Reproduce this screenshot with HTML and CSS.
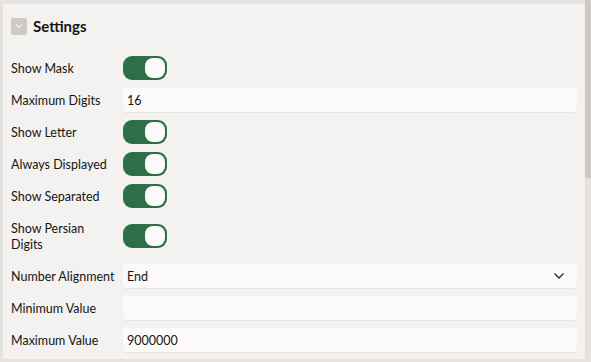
FILE: index.html
```html
<!DOCTYPE html>
<html lang="en">
<head>
    <meta charset="UTF-8">
    <meta name="viewport" content="width=device-width, initial-scale=1.0">
    <title>Settings</title>
    <link rel="stylesheet" href="styles.css">
</head>
<body>
    <div class="app">
        <div class="panel">
            <div class="panel-head">
                <span class="collapse">
                    <svg width="10" height="10" viewBox="0 0 10 10"><path d="M2 3.5 L5 6.5 L8 3.5" fill="none" stroke="#f4f3f1" stroke-width="1.2"/></svg>
                </span>
                <h3 class="title">Settings</h3>
            </div>
            <div class="form">
                <div class="row">
                    <label class="label">Show Mask</label>
                    <div class="field"><span class="switch on"></span></div>
                </div>
                <div class="row">
                    <label class="label">Maximum Digits</label>
                    <div class="field"><input class="text" type="text" value="16"></div>
                </div>
                <div class="row">
                    <label class="label">Show Letter</label>
                    <div class="field"><span class="switch on"></span></div>
                </div>
                <div class="row">
                    <label class="label">Always Displayed</label>
                    <div class="field"><span class="switch on"></span></div>
                </div>
                <div class="row">
                    <label class="label">Show Separated</label>
                    <div class="field"><span class="switch on"></span></div>
                </div>
                <div class="row">
                    <label class="label">Show Persian Digits</label>
                    <div class="field"><span class="switch on"></span></div>
                </div>
                <div class="row">
                    <label class="label">Number Alignment</label>
                    <div class="field">
                        <div class="select">
                            <span>End</span>
                            <svg width="12" height="8" viewBox="0 0 12 8"><path d="M1.5 1.5 L6 6 L10.5 1.5" fill="none" stroke="#2b2a28" stroke-width="1.3"/></svg>
                        </div>
                    </div>
                </div>
                <div class="row">
                    <label class="label">Minimum Value</label>
                    <div class="field"><input class="text" type="text" value=""></div>
                </div>
                <div class="row">
                    <label class="label">Maximum Value</label>
                    <div class="field"><input class="text" type="text" value="9000000"></div>
                </div>
            </div>
        </div>
        <div class="scrollbar"><div class="thumb"></div></div>
    </div>
</body>
</html>
```
FILE: styles.css
```css
* {
    margin: 0;
    padding: 0;
    box-sizing: border-box;
}
body {
    background-color: #e5e2df;
    font-family: 'Lato', sans-serif;
    color: #161513;
    height: 362px;
    overflow: hidden;
}
.app {
    display: flex;
    height: 359px;
}
.panel {
    flex: 1;
    margin-top: 4px;
    margin-left: 3px;
    background-color: #f3f2f0;
    padding: 0 8px 0 8px;
}
.panel-head {
    display: flex;
    align-items: center;
    gap: 6px;
    height: 43px;
    padding-top: 1px;
}
.collapse {
    width: 16px;
    height: 17px;
    border-radius: 2px;
    background-color: #cdcac6;
    display: flex;
    align-items: center;
    justify-content: center;
}
.title {
    font-size: 15px;
    font-weight: 700;
}
.form {
    padding-top: 5px;
}
.row {
    display: flex;
    align-items: center;
    padding: 4px 0;
}
.label {
    width: 112px;
    padding: 4px 6px 4px 0;
    font-size: 12.5px;
    line-height: 16px;
    position: relative;
    top: 1px;
}
.field {
    flex: 1;
}
.switch {
    display: block;
    width: 44px;
    height: 24px;
    border-radius: 9px;
    background-color: #2e6f48;
    position: relative;
}
.switch::after {
    content: '';
    position: absolute;
    top: 2px;
    right: 2px;
    width: 20px;
    height: 20px;
    border-radius: 8px;
    background-color: #fbfaf9;
}
.text, .select {
    display: flex;
    align-items: center;
    width: 100%;
    height: 24px;
    border: none;
    outline: none;
    border-radius: 3px;
    background-color: #fbfaf9;
    box-shadow: 0 1px 1px rgba(0, 0, 0, .06);
    padding: 0 4px;
    font-family: 'Lato', sans-serif;
    font-size: 12.5px;
    color: #161513;
}
.select {
    justify-content: space-between;
    padding-right: 12px;
}
.scrollbar {
    width: 6px;
    background-color: #e5e2df;
}
.thumb {
    height: 178px;
    background-color: #cbc7c3;
}
```
